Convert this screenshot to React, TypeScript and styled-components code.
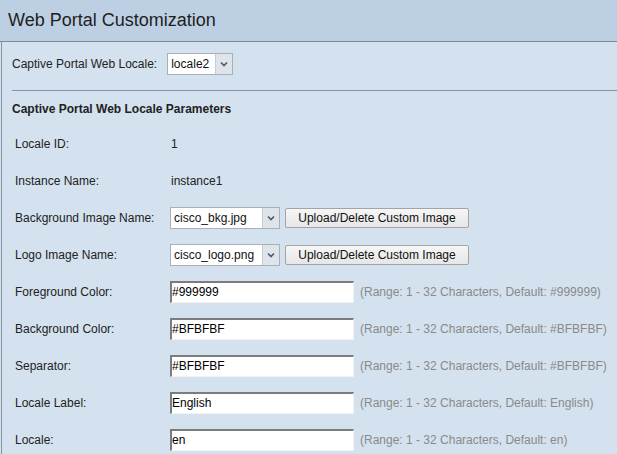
import styled, { createGlobalStyle } from 'styled-components';

const GlobalStyle = createGlobalStyle`
	html, body {
		margin: 0;
		padding: 0;
	}
	body {
		background-color: #d4e1ee;
		font-family: "Liberation Sans", Arial, sans-serif;
		font-size: 12px;
		color: #222;
	}
`;

const Page = styled.div`
	width: 100%;
	height: 100vh;
	overflow: hidden;
	background-color: #d4e1ee;
`;

const Header = styled.div`
	height: 41px;
	display: flex;
	align-items: center;
	padding-left: 8px;
	background-color: #bccfe3;
	border-bottom: 1px solid #7d8896;
`;

const Title = styled.h1`
	margin: 0;
	font-size: 18px;
	font-weight: normal;
	color: #1e1e1e;
`;

const Panel = styled.div`
	margin-left: 1px;
	border-left: 1px solid #8895a4;
	padding-left: 10px;
`;

const LocaleBar = styled.div`
	display: flex;
	align-items: center;
	gap: 10px;
	height: 22px;
	padding-top: 11px;
	padding-bottom: 15px;
	border-bottom: 1px solid #8893a0;
`;

const Heading = styled.div`
	margin-top: 11px;
	height: 14px;
	line-height: 14px;
	font-weight: bold;
	margin-bottom: 9px;
`;

const Row = styled.div`
	display: flex;
	align-items: center;
	height: 37px;
	padding-left: 3px;
`;

const Label = styled.div`
	width: 155px;
	flex-shrink: 0;
`;

const Value = styled.div`
	padding-left: 1px;
`;

const SelectBox = styled.div<{ $width: number }>`
	display: flex;
	width: ${(p) => p.$width}px;
	height: 22px;
	box-sizing: border-box;
	border: 1px solid #a9b0b7;
	background-color: #fff;
`;

const SelectText = styled.div`
	flex: 1;
	display: flex;
	align-items: center;
	padding-left: 3px;
	white-space: nowrap;
	overflow: hidden;
	color: #111;
`;

const SelectArrow = styled.div`
	width: 16px;
	display: flex;
	align-items: center;
	justify-content: center;
	background-color: #dfe4ea;
	border-left: 1px solid #c7cdd4;
`;

const Button = styled.button`
	margin-left: 5px;
	width: 184px;
	height: 20px;
	padding: 0;
	font-family: inherit;
	font-size: 12px;
	color: #111;
	background: linear-gradient(#f6f6f6, #e6e6e6);
	border: 1px solid #a4a4a4;
	border-radius: 2px;
`;

const TextInput = styled.input`
	width: 184px;
	height: 22px;
	box-sizing: border-box;
	padding: 0;
	font-family: inherit;
	font-size: 12px;
	color: #000;
	background-color: #fff;
	border-top: 2px solid #7c7c7c;
	border-left: 2px solid #7c7c7c;
	border-right: 1px solid #f2f2f2;
	border-bottom: 1px solid #f2f2f2;
	outline: none;
`;

const Hint = styled.span`
	margin-left: 6px;
	color: #8a8a8a;
	white-space: nowrap;
`;

const Chevron = () => (
	<svg width="8" height="6" viewBox="0 0 8 6">
		<polyline points="1,1.5 4,4.5 7,1.5" fill="none" stroke="#4b5968" strokeWidth="1.6" />
	</svg>
);

const Select = ({ value, width }: { value: string; width: number }) => (
	<SelectBox $width={width}>
		<SelectText>{value}</SelectText>
		<SelectArrow>
			<Chevron />
		</SelectArrow>
	</SelectBox>
);

const textFields = [
	{ label: 'Foreground Color:', value: '#999999' },
	{ label: 'Background Color:', value: '#BFBFBF' },
	{ label: 'Separator:', value: '#BFBFBF' },
	{ label: 'Locale Label:', value: 'English' },
	{ label: 'Locale:', value: 'en' }
];

const App = () => {
	return (
		<Page>
			<GlobalStyle />
			<Header>
				<Title>Web Portal Customization</Title>
			</Header>
			<Panel>
				<LocaleBar>
					<span>Captive Portal Web Locale:</span>
					<Select value="locale2" width={66} />
				</LocaleBar>
				<Heading>Captive Portal Web Locale Parameters</Heading>
				<Row>
					<Label>Locale ID:</Label>
					<Value>1</Value>
				</Row>
				<Row>
					<Label>Instance Name:</Label>
					<Value>instance1</Value>
				</Row>
				<Row>
					<Label>Background Image Name:</Label>
					<Select value="cisco_bkg.jpg" width={110} />
					<Button>Upload/Delete Custom Image</Button>
				</Row>
				<Row>
					<Label>Logo Image Name:</Label>
					<Select value="cisco_logo.png" width={110} />
					<Button>Upload/Delete Custom Image</Button>
				</Row>
				{textFields.map((f) => (
					<Row key={f.label}>
						<Label>{f.label}</Label>
						<TextInput defaultValue={f.value} />
						<Hint>(Range: 1 - 32 Characters, Default: {f.value})</Hint>
					</Row>
				))}
			</Panel>
		</Page>
	);
};

export default App;
